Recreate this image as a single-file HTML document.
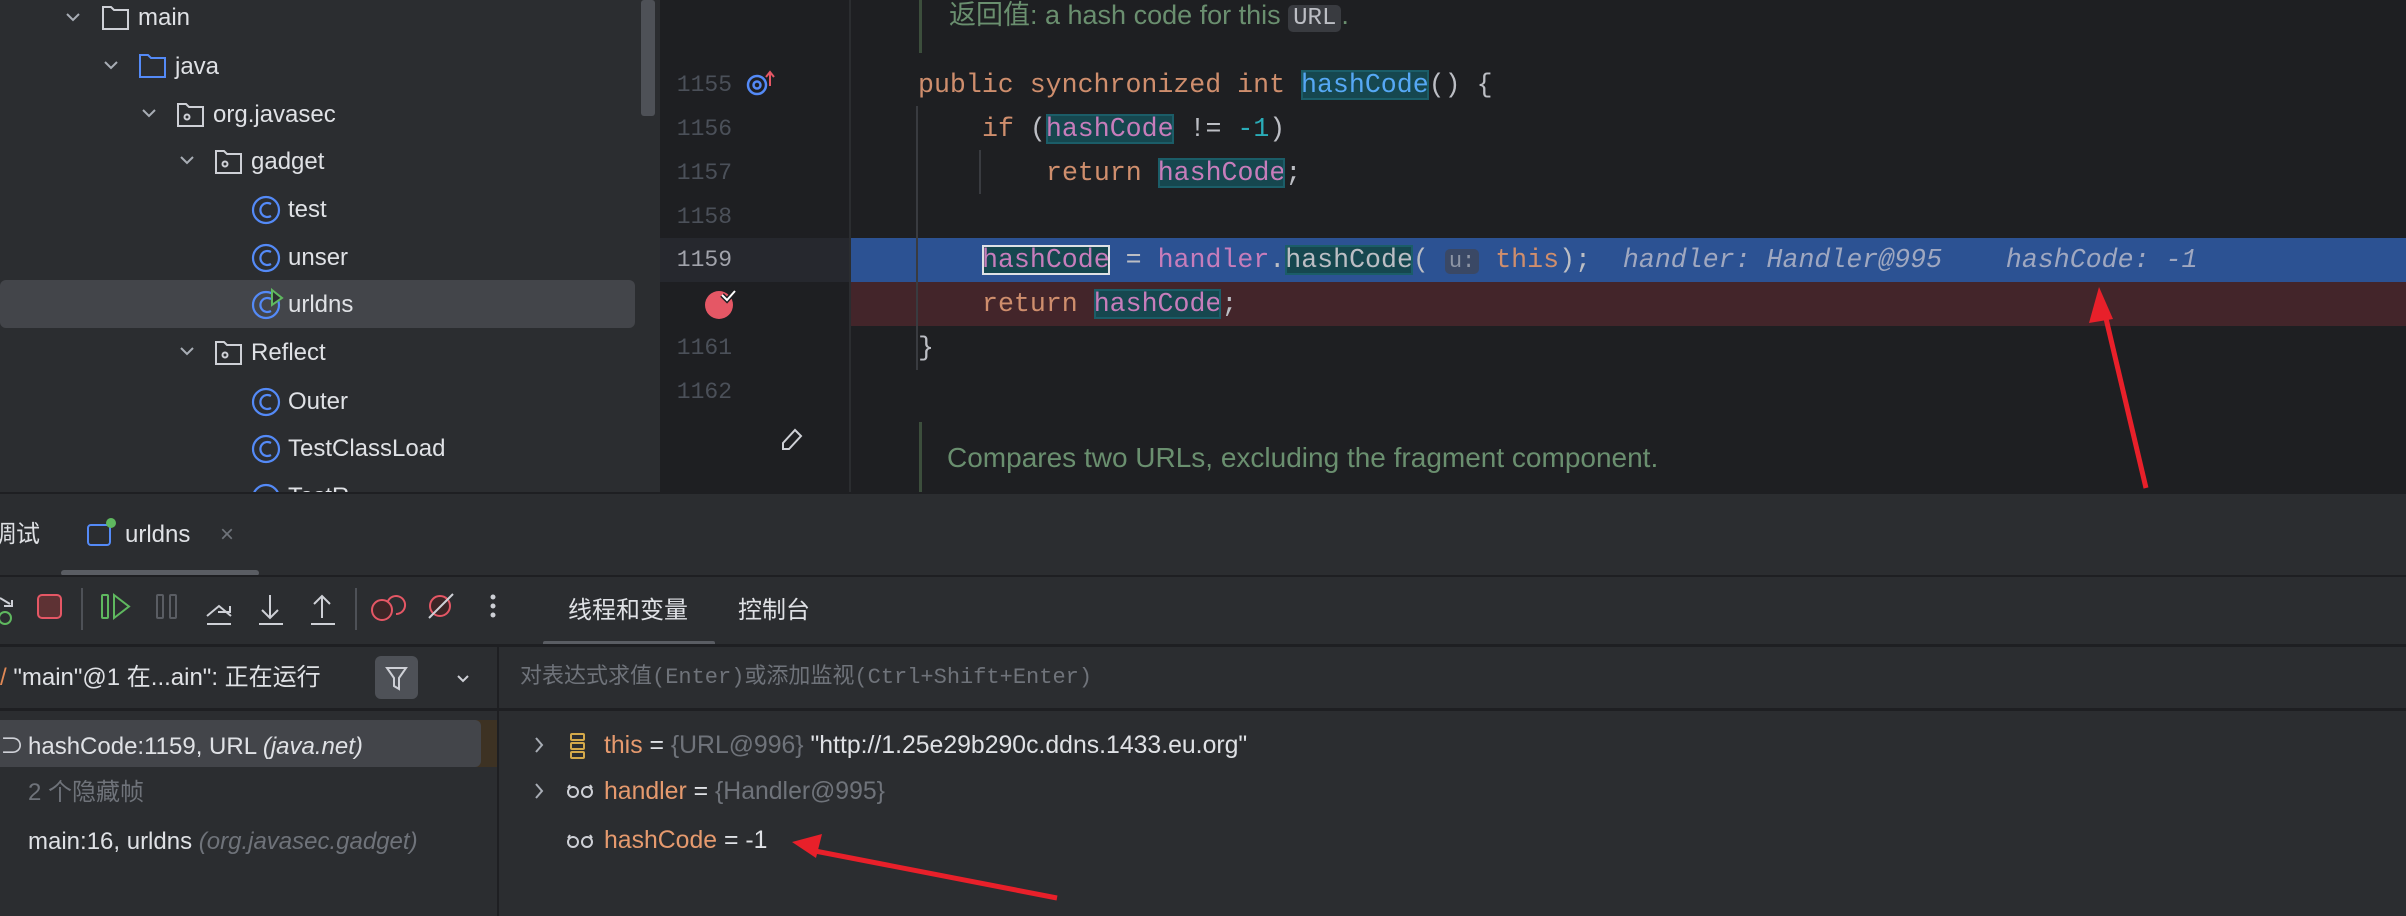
<!DOCTYPE html>
<html><head><meta charset="utf-8"><style>
*{margin:0;padding:0;box-sizing:border-box}
body{width:2406px;height:916px;overflow:hidden;background:#1e1f22;position:relative;font-family:"Liberation Sans","Noto Sans CJK SC",sans-serif;color:#dfe1e5}
.a{position:absolute;white-space:nowrap}
.t{font-size:24px;line-height:30px}
.m{font-family:"Liberation Mono","Noto Sans CJK SC",monospace;font-size:26.6px;line-height:44px}
.ln{position:absolute;left:670px;width:62px;text-align:right;font-family:"Liberation Mono",monospace;font-size:23px;color:#4b5059;line-height:44px}
.kw{color:#cf8e6d}.fld{color:#c77dbb}.num{color:#2aacb8}.fn{color:#56a8f5}
.hl{background:#16474f;outline:2px solid #1b5d68;outline-offset:-2px}
.gray{color:#6f737a}
</style></head><body>
<!-- project tree -->
<div class="a" style="left:0;top:0;width:660px;height:492px;background:#2b2d30"></div>
<div class="a" style="left:641px;top:0;width:14px;height:116px;background:#4e5157;border-radius:3px"></div>
<div class="a" style="left:0;top:280px;width:635px;height:48px;background:#43454a;border-radius:6px"></div>
<svg class="a" style="left:0;top:0" width="660" height="492" fill="none" stroke-width="2">
<g stroke="#a8adb5"><path d="M67 14l6 6 6-6M105 62l6 6 6-6M143 110l6 6 6-6M181 157l6 6 6-6M181 348l6 6 6-6"/></g>
<path d="M103 7h8l3 3h14v19h-25z" stroke="#ced0d6"/>
<path d="M140 55h8l3 3h14v19h-25z" stroke="#548af7"/>
<g stroke="#ced0d6"><path d="M178 104h8l3 3h14v19h-25z"/><circle cx="187" cy="117" r="2.5"/>
<path d="M216 151h8l3 3h14v19h-25z"/><circle cx="225" cy="164" r="2.5"/>
<path d="M216 342h8l3 3h14v19h-25z"/><circle cx="225" cy="355" r="2.5"/></g>
<g stroke="#548af7" stroke-width="2.2"><circle cx="266" cy="210" r="13"/><circle cx="266" cy="258" r="13"/><circle cx="266" cy="305" r="13"/><circle cx="266" cy="402" r="13"/><circle cx="266" cy="449" r="13"/><circle cx="266" cy="498" r="13"/>
<path d="M271 204a7 7 0 1 0 0 12M271 252a7 7 0 1 0 0 12M271 299a7 7 0 1 0 0 12M271 396a7 7 0 1 0 0 12M271 443a7 7 0 1 0 0 12"/></g>
<path d="M272 290l10 8-10 7z" fill="#2b2d30" stroke="#5fb85f"/>
</svg>
<div class="a t" style="left:138px;top:3px">main</div>
<div class="a t" style="left:175px;top:52px">java</div>
<div class="a t" style="left:213px;top:100px">org.javasec</div>
<div class="a t" style="left:251px;top:147px">gadget</div>
<div class="a t" style="left:288px;top:195px">test</div>
<div class="a t" style="left:288px;top:243px">unser</div>
<div class="a t" style="left:288px;top:290px">urldns</div>
<div class="a t" style="left:251px;top:338px">Reflect</div>
<div class="a t" style="left:288px;top:387px">Outer</div>
<div class="a t" style="left:288px;top:434px">TestClassLoad</div>
<div class="a t" style="left:288px;top:482px">TestR</div>
<!-- editor -->
<div class="a" style="left:849px;top:0;width:2px;height:492px;background:#2b2d30"></div>
<div class="a" style="left:660px;top:238px;width:189px;height:44px;background:#26282e"></div>
<div class="a" style="left:851px;top:238px;width:1555px;height:44px;background:#2c5293"></div>
<div class="a" style="left:851px;top:282px;width:1555px;height:44px;background:#43252a"></div>
<div class="a" style="left:916px;top:106px;width:2px;height:264px;background:#393b40"></div>
<div class="a" style="left:979px;top:150px;width:2px;height:44px;background:#393b40"></div>
<div class="a" style="left:919px;top:0;width:3px;height:53px;background:#3c4e3c"></div>
<div class="a" style="left:919px;top:422px;width:3px;height:70px;background:#3c4e3c"></div>
<div class="a" style="left:949px;top:-1px;font-size:27px;line-height:32px;color:#6a8f6f">返回值: a hash code for this <span style="background:#393b40;color:#bcbec4;border-radius:5px;padding:0 5px;font-family:'Liberation Mono',monospace;font-size:24px">URL</span>.</div>
<div class="a" style="left:947px;top:442px;font-size:28px;line-height:32px;color:#6a8f6f">Compares two URLs, excluding the fragment component.</div>
<div class="ln" style="top:63px">1155</div><div class="ln" style="top:107px">1156</div><div class="ln" style="top:151px">1157</div><div class="ln" style="top:195px">1158</div><div class="ln" style="top:238px;color:#a1a3ab">1159</div><div class="ln" style="top:326px">1161</div><div class="ln" style="top:370px">1162</div>
<svg class="a" style="left:740px;top:60px" width="70" height="400" fill="none">
<circle cx="17" cy="25" r="9" stroke="#548af7" stroke-width="2.5"/><circle cx="17" cy="25" r="3.5" stroke="#548af7" stroke-width="2.5"/>
<path d="M30 26V13M26 17l4-5 4 5" stroke="#e55765" stroke-width="2"/>
<path d="M43 383l12-13 6 6-12 13h-6z" stroke="#ced0d6" stroke-width="2"/>
</svg>
<svg class="a" style="left:700px;top:285px" width="40" height="40"><circle cx="19" cy="20" r="14" fill="#e55765"/><path d="M22 10l5 5 8-9" stroke="#1e1f22" stroke-width="5" fill="none"/><path d="M22 10l5 5 8-9" stroke="#fff" stroke-width="2" fill="none"/></svg>
<div class="a m" style="left:918px;top:63px;color:#bcbec4"><span class="kw">public synchronized int </span><span class="fn hl">hashCode</span>() {</div>
<div class="a m" style="left:982px;top:107px;color:#bcbec4"><span class="kw">if </span>(<span class="fld hl">hashCode</span> != <span class="num">-1</span>)</div>
<div class="a m" style="left:1046px;top:151px;color:#bcbec4"><span class="kw">return </span><span class="fld hl">hashCode</span>;</div>
<div class="a m" style="left:982px;top:238px;color:#bcbec4"><span class="fld hl" style="outline-color:#dfe1e5">hashCode</span> = <span class="fld">handler</span>.<span class="hl">hashCode</span>( <span style="background:#3a4865;color:#8d95a5;border-radius:5px;font-size:22px;padding:0 4px">u:</span> <span class="kw">this</span>);&nbsp; <i style="color:#a0a8c0">handler: Handler@995&nbsp;&nbsp;&nbsp; hashCode: -1</i></div>
<div class="a m" style="left:982px;top:282px;color:#bcbec4"><span class="kw">return </span><span class="fld hl">hashCode</span>;</div>
<div class="a m" style="left:918px;top:326px;color:#bcbec4">}</div>
<!-- bottom panel -->
<div class="a" style="left:0;top:492px;width:2406px;height:424px;background:#2b2d30;border-top:2px solid #1e1f22"></div>
<div class="a t" style="left:-8px;top:520px">调试</div>
<svg class="a" style="left:85px;top:515px" width="35" height="40" fill="none"><rect x="3" y="10" width="22" height="20" rx="3" stroke="#548af7" stroke-width="2"/><circle cx="26" cy="8" r="5" fill="#5fb85f"/></svg>
<div class="a t" style="left:125px;top:520px">urldns</div>
<div class="a t gray" style="left:220px;top:520px">×</div>
<div class="a" style="left:61px;top:570px;width:198px;height:6px;background:#5a5d63;border-radius:3px"></div>
<div class="a" style="left:0;top:575px;width:2406px;height:2px;background:#1e1f22"></div>
<svg class="a" style="left:0;top:578px" width="520" height="66" fill="none" stroke-width="2">
<path d="M0 20l10 6M4 28h8v-6" stroke="#ced0d6"/><circle cx="5" cy="40" r="6" stroke="#5fb85f"/>
<rect x="38" y="17" width="23" height="23" rx="4" fill="#5e3234" stroke="#e55765"/>
<path d="M82 10v42M356 10v42" stroke="#4e5157"/>
<rect x="102" y="17" width="6" height="23" rx="1" stroke="#5fb85f"/><path d="M114 17l15 11.5-15 11.5z" stroke="#5fb85f"/>
<rect x="157" y="17" width="6" height="23" rx="1" stroke="#5a5d63"/><rect x="170" y="17" width="6" height="23" rx="1" stroke="#5a5d63"/>
<g stroke="#ced0d6"><path d="M207 38l12-10 12 10M218 34h12v-6M207 46h24M270 17v22M262 32l8 8 8-8M259 46h24M322 40V18M314 26l8-8 8 8M311 46h24"/></g>
<circle cx="382" cy="32" r="10" fill="#3d2526" stroke="#e55765"/><path d="M388 23a9 9 0 1 1 8 13" stroke="#e55765"/>
<circle cx="440" cy="28" r="10" fill="#3d2526" stroke="#e55765"/><path d="M429 40l24-24" stroke="#ced0d6"/>
<g fill="#ced0d6"><circle cx="493" cy="19" r="2.5"/><circle cx="493" cy="28" r="2.5"/><circle cx="493" cy="37" r="2.5"/></g>
</svg>
<div class="a t" style="left:568px;top:596px">线程和变量</div>
<div class="a t" style="left:738px;top:596px">控制台</div>
<div class="a" style="left:543px;top:641px;width:172px;height:5px;background:#5a5d63;border-radius:2px"></div>
<div class="a" style="left:0;top:644px;width:2406px;height:3px;background:#1e1f22"></div>
<div class="a" style="left:497px;top:647px;width:2px;height:269px;background:#1e1f22"></div>
<div class="a t" style="left:0;top:663px"><span style="color:#e08855">/</span> "main"@1 在...ain": 正在运行</div>
<div class="a" style="left:375px;top:656px;width:43px;height:43px;background:#4e5157;border-radius:6px"></div>
<svg class="a" style="left:375px;top:656px" width="100" height="43" fill="none" stroke="#ced0d6" stroke-width="2"><path d="M12 12h19l-7 10v11l-5-3v-8z"/><path d="M83 20l5 5 5-5"/></svg>
<div class="a" style="left:520px;top:663px;font-family:'Liberation Mono','Noto Sans CJK SC',monospace;font-size:22px;line-height:30px;color:#6f737a">对表达式求值(Enter)或添加监视(Ctrl+Shift+Enter)</div>
<div class="a" style="left:0;top:708px;width:2406px;height:3px;background:#1e1f22"></div>
<div class="a" style="left:0;top:720px;width:497px;height:47px;background:#3d3223"></div>
<div class="a" style="left:0;top:720px;width:481px;height:47px;background:#43454a;border-radius:0 6px 6px 0"></div>
<div class="a t" style="left:0;top:732px;color:#ced0d6">⊃</div>
<div class="a t" style="left:28px;top:732px">hashCode:1159, URL <i style="color:#dfe1e5">(java.net)</i></div>
<div class="a t gray" style="left:28px;top:778px">2 个隐藏帧</div>
<div class="a t" style="left:28px;top:827px">main:16, urldns <i class="gray">(org.javasec.gadget)</i></div>
<svg class="a" style="left:530px;top:728px" width="70" height="130" fill="none" stroke-width="2">
<path d="M6 10l6 7-6 7M6 56l6 7-6 7" stroke="#a8adb5"/>
<g stroke="#d4a94a"><rect x="41" y="6" width="13" height="6" rx="1"/><rect x="41" y="15" width="13" height="6" rx="1"/><rect x="41" y="24" width="13" height="6" rx="1"/></g>
<g stroke="#ced0d6"><circle cx="43" cy="64" r="5"/><circle cx="57" cy="64" r="5"/><path d="M38 60l2-3M62 60l-2-3"/><circle cx="43" cy="114" r="5"/><circle cx="57" cy="114" r="5"/><path d="M38 110l2-3M62 110l-2-3"/></g>
</svg>
<div class="a" style="left:604px;top:731px;font-size:24.8px;line-height:30px"><span style="color:#e69a6e">this</span> = <span class="gray">{URL@996}</span> "http://1.25e29b290c.ddns.1433.eu.org"</div>
<div class="a" style="left:604px;top:777px;font-size:24.8px;line-height:30px"><span style="color:#e69a6e">handler</span> = <span class="gray">{Handler@995}</span></div>
<div class="a" style="left:604px;top:826px;font-size:24.8px;line-height:30px"><span style="color:#e69a6e">hashCode</span> = -1</div>
<!-- arrows -->
<svg class="a" style="left:0;top:0" width="2406" height="916">
<path d="M2146 488L2104 310" stroke="#e8202a" stroke-width="5"/><path d="M2099 287l-10 36 24-4z" fill="#e8202a"/>
<path d="M1057 898L815 851" stroke="#e8202a" stroke-width="5"/><path d="M792 842l30-8-6 24z" fill="#e8202a"/>
</svg>
</body></html>
